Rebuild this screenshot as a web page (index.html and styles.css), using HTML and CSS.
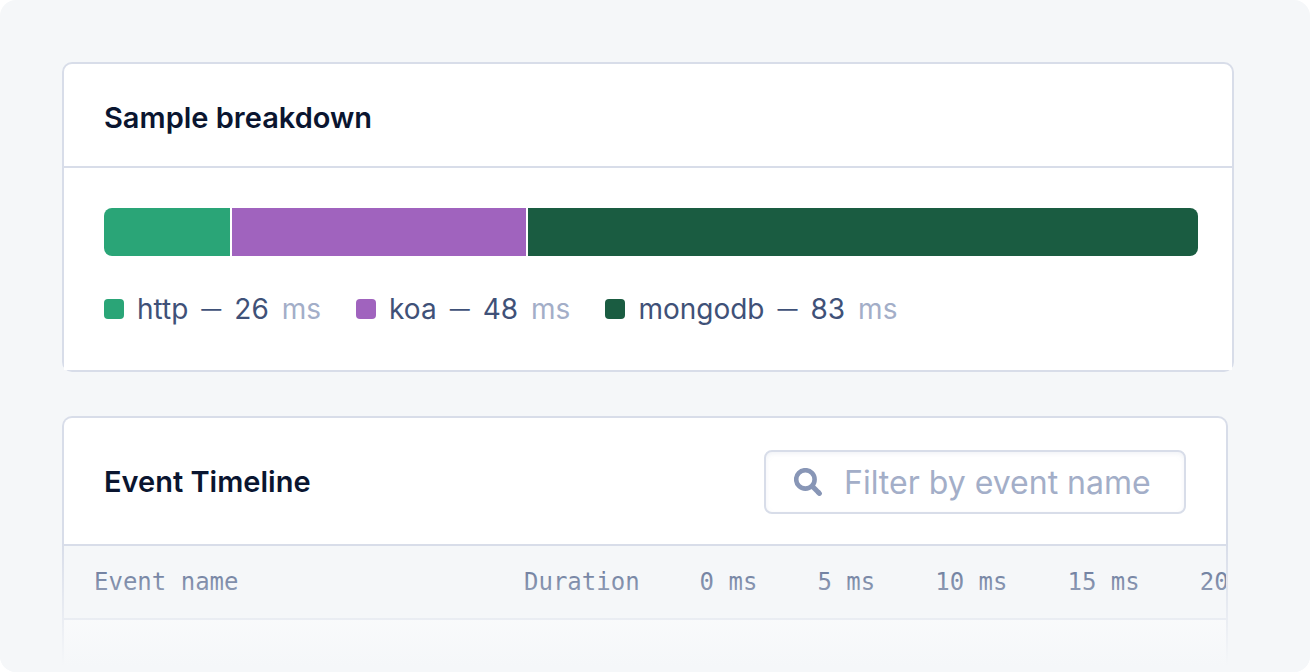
FILE: index.html
```
<!DOCTYPE html>
<html lang="en">
<head>
<meta charset="UTF-8">
<meta name="viewport" content="width=device-width, initial-scale=1.0">
<title>Sample breakdown</title>
<link rel="stylesheet" href="styles.css">
</head>
<body>
<main class="page">
    <section class="card card-breakdown">
        <header class="card-header">
            <h2 class="card-title">Sample breakdown</h2>
        </header>
        <div class="breakdown">
            <div class="bar">
                <div class="bar-part http" style="width: 11.5%"></div>
                <div class="bar-part koa" style="width: 26.9%"></div>
                <div class="bar-part mongodb bar-rest"></div>
            </div>
            <ul class="legend">
                <li class="legend-item"><span class="swatch http"></span>http <span class="dash">—</span> 26 <span class="unit">ms</span></li>
                <li class="legend-item"><span class="swatch koa"></span>koa <span class="dash">—</span> 48 <span class="unit">ms</span></li>
                <li class="legend-item"><span class="swatch mongodb"></span>mongodb <span class="dash">—</span> 83 <span class="unit">ms</span></li>
            </ul>
        </div>
    </section>

    <section class="card card-timeline">
        <header class="card-header timeline-header">
            <h2 class="card-title">Event Timeline</h2>
            <label class="search">
                <svg class="search-icon" width="28" height="28" viewBox="0 0 28 28" fill="none" stroke="currentColor" aria-hidden="true">
                    <circle cx="11.4" cy="11.4" r="9.2" stroke-width="4.6"/>
                    <path d="M17.8 17.8L25 25" stroke-width="5"/>
                    <path d="M24.6 24.6L25.4 25.4" stroke-width="5" stroke-linecap="round" stroke-linejoin="round"/>
                </svg>
                <input class="search-input" type="text" placeholder="Filter by event name" aria-label="Filter by event name">
            </label>
        </header>
        <table class="timeline">
            <thead>
                <tr>
                    <th class="col-name">Event name</th>
                    <th>Duration</th>
                    <th>0 ms</th>
                    <th>5 ms</th>
                    <th>10 ms</th>
                    <th>15 ms</th>
                    <th>20 ms</th>
                </tr>
            </thead>
        </table>
    </section>
</main>
</body>
</html>
```
FILE: styles.css
```
* {
    box-sizing: border-box;
}
body {
    margin: 0;
    background-color: #fff;
    font-family: Inter, "Liberation Sans", sans-serif;
    color: #3f5178;
}
.page {
    position: relative;
    display: flex;
    flex-direction: column;
    gap: 44px;
    min-height: 100vh;
    padding: 62px 76px 0 62px;
    background-color: #f5f7f9;
    border-radius: 16px;
    overflow: hidden;
}
/* fades the timeline out at the bottom of the page */
.page::after {
    content: "";
    position: absolute;
    left: 0;
    right: 0;
    bottom: 0;
    height: 128px;
    background: linear-gradient(rgba(245, 247, 249, 0), #f5f7f9 95%);
    pointer-events: none;
}
.card {
    background-color: #fff;
    border: 2px solid #d8dde9;
    border-radius: 10px;
}
.card-header {
    display: flex;
    align-items: center;
    justify-content: space-between;
    height: 104px;
    padding: 6px 40px 0;
    border-bottom: 2px solid #d8dde9;
}
.card-title {
    margin: 0;
    font-size: 29px;
    line-height: 40px;
    font-weight: 600;
    color: #0a1530;
}
.breakdown {
    padding: 40px 34px 40px 40px;
    background-color: #fff;
}
.bar {
    display: flex;
    gap: 2px;
    height: 48px;
    border-radius: 8px;
    overflow: hidden;
}
.bar-rest {
    flex: 1;
}
.http {
    background-color: #2aa577;
}
.koa {
    background-color: #a063be;
}
.mongodb {
    background-color: #1a5c41;
}
.legend {
    display: flex;
    flex-wrap: wrap;
    gap: 35px;
    margin: 32px 0 0;
    padding: 0;
    list-style: none;
    font-size: 28px;
    line-height: 42px;
}
.legend-item {
    display: flex;
    align-items: center;
    gap: 13px;
}
.swatch {
    width: 20px;
    height: 20px;
    border-radius: 4px;
}
.dash {
    font-size: 20px;
}
.unit {
    color: #a3aec8;
}
.card-timeline {
    flex: 1;
    margin-right: 6px;
    border-bottom: 0;
    border-radius: 10px 10px 0 0;
    overflow: hidden;
}
.timeline-header {
    height: 128px;
    padding-top: 2px;
}
.search {
    display: flex;
    align-items: center;
    gap: 22px;
    width: 422px;
    height: 64px;
    padding: 0 28px;
    border: 2px solid #d8dde9;
    border-radius: 8px;
    box-shadow: inset 0 2px 4px rgba(216, 221, 233, 0.35);
}
.search-icon {
    flex: none;
    color: #8896b6;
}
.search-input {
    flex: 1;
    min-width: 0;
    padding: 0;
    border: 0;
    outline: 0;
    background: none;
    font-family: inherit;
    font-size: 32px;
    color: #3f5178;
}
.search-input::placeholder {
    color: #a3aec8;
    opacity: 1;
}
.timeline {
    width: max-content;
    min-width: 100%;
    border-collapse: collapse;
    background-color: #f5f7f9;
}
.timeline th {
    height: 73px;
    padding: 0 30px;
    border-bottom: 2px solid #d8dde9;
    font-family: "DejaVu Sans Mono", monospace;
    font-size: 24px;
    font-weight: 400;
    text-align: left;
    white-space: nowrap;
    color: #4c5f88;
}
.timeline .col-name {
    min-width: 430px;
}
```
